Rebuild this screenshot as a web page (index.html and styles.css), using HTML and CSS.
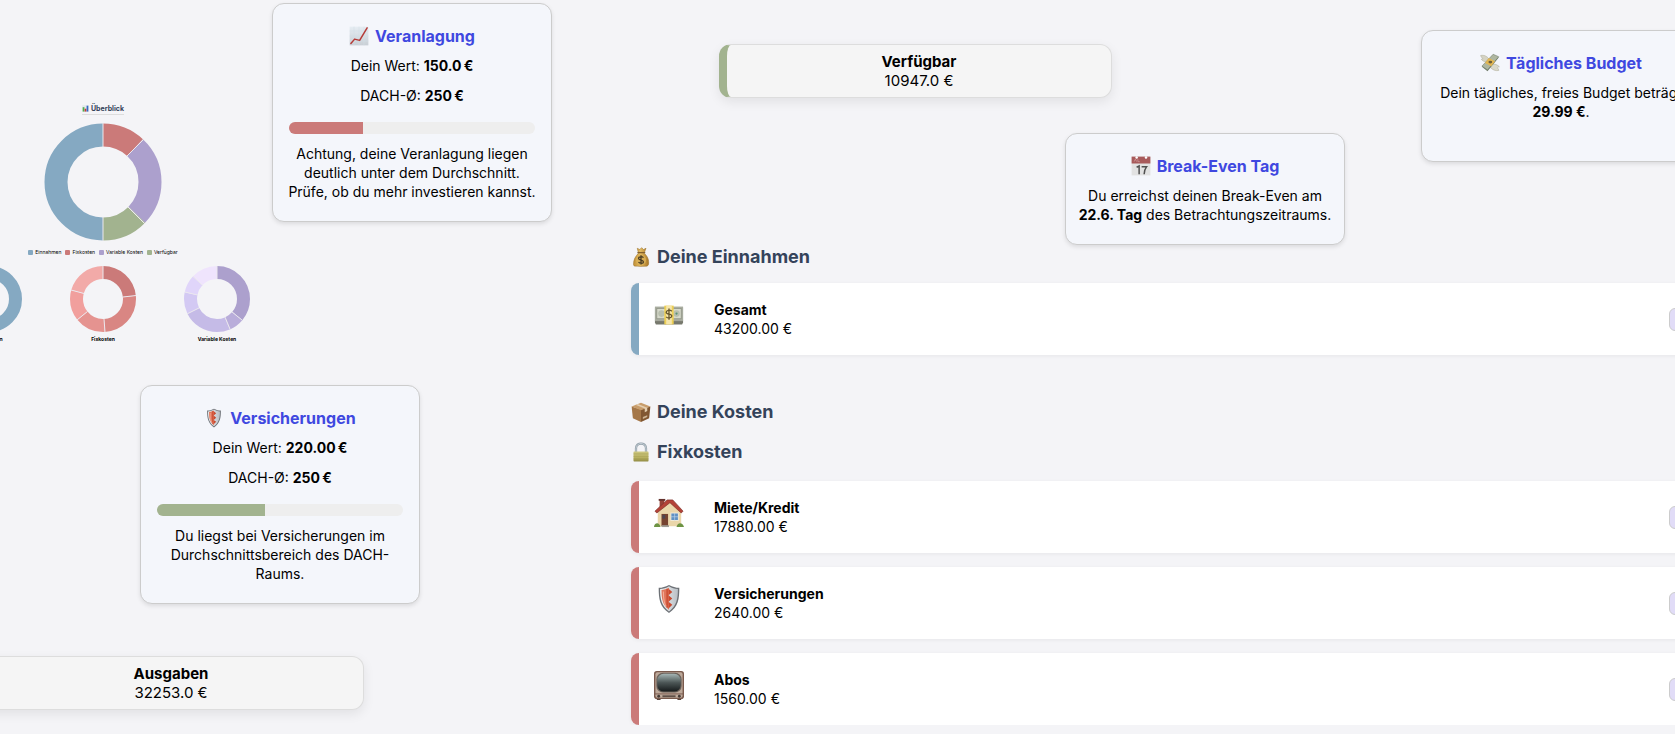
FILE: index.html
```html
<!DOCTYPE html>
<html lang="de">
<head>
  <meta charset="UTF-8" />
  <meta name="viewport" content="width=device-width, initial-scale=1.0"/>
  <title>Finanzübersicht</title>
  <link rel="stylesheet" href="styles.css">
</head>
<body>
  <!-- Icons -->
  <svg class="sprite" aria-hidden="true">
    <defs>
      <linearGradient id="paper" x1="0" y1="0" x2="0" y2="1">
        <stop offset="0" stop-color="#e6edf3"/><stop offset="1" stop-color="#c9cfd5"/>
      </linearGradient>
      <linearGradient id="screen" x1="0" y1="0" x2="0" y2="1">
        <stop offset="0" stop-color="#a5b5b4"/><stop offset="0.5" stop-color="#4c5656"/><stop offset="1" stop-color="#161a1b"/>
      </linearGradient>
      <linearGradient id="gold" x1="0" y1="0" x2="1" y2="0">
        <stop offset="0" stop-color="#c08f36"/><stop offset="0.45" stop-color="#e3bb62"/><stop offset="1" stop-color="#a97727"/>
      </linearGradient>
      <linearGradient id="brass" x1="0" y1="0" x2="0" y2="1">
        <stop offset="0" stop-color="#cfc983"/><stop offset="0.6" stop-color="#b9b263"/><stop offset="1" stop-color="#938d45"/>
      </linearGradient>
      <linearGradient id="steel" x1="0" y1="0" x2="1" y2="0">
        <stop offset="0" stop-color="#f2f4f5"/><stop offset="1" stop-color="#b9bfc5"/>
      </linearGradient>
    </defs>
    <symbol id="i-trend" viewBox="0 0 32 32">
      <rect x="1" y="1" width="30" height="30" fill="url(#paper)"/>
      <path d="M1 8h30M1 16h30M1 24h30M8 1v30M16 1v30M24 1v30" stroke="#d3dce4" stroke-width="0.8"/>
      <path d="M3 28l6-7 8 2 6-10 6-10" fill="none" stroke="#b63b38" stroke-width="2.4" stroke-linecap="round" stroke-linejoin="round"/>
    </symbol>
    <symbol id="i-bars" viewBox="0 0 32 32">
      <rect x="1" y="1" width="30" height="30" fill="#e3e8ec"/>
      <rect x="3" y="10" width="8" height="20" fill="#4fae4a"/>
      <rect x="12" y="17" width="8" height="13" fill="#c8393a"/>
      <rect x="21" y="3" width="8" height="27" fill="#3568c4"/>
    </symbol>
    <symbol id="i-shield" viewBox="0 0 32 32">
      <path d="M16 1c4 2 7 3 11 3 0 12-1 20-11 27C6 24 5 16 5 4c4 0 7-1 11-3z" fill="#6d7176"/>
      <path d="M16 2.500c3 2 6 2.700 9.500 2.900C25.500 16 24 23.500 16 29.200 8 23.500 6.500 16 6.500 5.400 10 5.200 13 4.500 16 2.500z" fill="url(#steel)"/>
      <path d="M16 4c-3 1.500-5 2.200-8 2.400C8 16 9 22 16 27.500z" fill="#e0765c"/>
      <path d="M15.500 5l4 3.500-4 3.500zM15.500 12l4 3.500-4 3.500zM15.500 19l4 3-4 4z" fill="#c94a30"/>
      <path d="M14 5v20" stroke="#c94a30" stroke-width="1.500"/>
      <path d="M10 8c0 7 0 12 3 16" fill="none" stroke="#f2aa94" stroke-width="1.200"/>
    </symbol>
    <symbol id="i-calendar" viewBox="0 0 32 32">
      <rect x="1" y="1" width="30" height="30" fill="#e2e2e2"/>
      <rect x="1" y="1" width="30" height="11" fill="#a85a5b"/>
      <path d="M5 9l2-4 2 4M11 5v4h3" fill="none" stroke="#d5a5a5"/>
      <circle cx="9" cy="2.500" r="2" fill="#fff"/><circle cx="24" cy="2.500" r="2" fill="#fff"/>
      <path d="M9 18l4-2v13M17 17h8c-3 4-4 8-4 12" fill="none" stroke="#505050" stroke-width="2.400"/>
    </symbol>
    <symbol id="i-wings" viewBox="0 0 32 32">
      <path d="M15 10C10 4 6 3 1 4c1 3 2 4 4 5-1 0-2 1-3 1 2 3 5 4 9 4z" fill="#d5d3c3" stroke="#aaa895" stroke-width="0.800"/>
      <path d="M19 18c5-1 9 1 12 4-2 0-3 1-3 2 1 1 2 2 2 4-5 1-11-1-14-6z" fill="#dbd9ca" stroke="#aaa895" stroke-width="0.800"/>
      <path d="M21 3l9 4-18 22-9-7z" fill="#6f7b69"/>
      <path d="M21 2l9 4-18 21-9-6z" fill="#aeb6a0" stroke="#667260" stroke-width="0.800"/>
      <path d="M14 8l10 5-6 8-10-5z" fill="#e2b652"/>
      <ellipse cx="16.500" cy="14.500" rx="3" ry="2.200" fill="#6b5f3c"/>
    </symbol>
    <symbol id="i-bag" viewBox="0 0 32 32">
      <path d="M10 2l4 2 3-3 3 3 4-2-3 8c6 5 8 11 7 18-1 3-3 3-12 3S4 31 4 28c0-8 3-13 8-18z" fill="url(#gold)" stroke="#94681f" stroke-width="0.800"/>
      <path d="M11 9h11" stroke="#83602d" stroke-width="2" stroke-linecap="round"/>
      <circle cx="16" cy="21" r="8" fill="#d8ae55"/>
      <path d="M20 17c-2-2-8-2-8 1 0 4 8 2 8 6 0 3-6 3-8 0M16 13v15" fill="none" stroke="#473b25" stroke-width="2"/>
    </symbol>
    <symbol id="i-note" viewBox="0 0 32 32">
      <path d="M1 8h30v16l-1 2H2l-1-2z" fill="#77796d"/>
      <path d="M1 22h30" stroke="#a9ac9f" stroke-width="1"/>
      <rect x="1" y="7" width="30" height="15" fill="#a9ada0"/>
      <rect x="3" y="9" width="26" height="11" fill="#d6d9cb" stroke="#8c9082" stroke-width="0.800"/>
      <circle cx="8" cy="14.500" r="3.500" fill="#b8bfae"/><circle cx="24" cy="14.500" r="3.500" fill="#b8bfae"/>
      <circle cx="24" cy="14.500" r="1.200" fill="#579277"/>
      <rect x="11" y="6" width="10" height="20" fill="#edcf55"/>
      <rect x="13" y="6" width="6" height="20" fill="#f5e6ac"/>
      <path d="M19 12c-2-2-6-1-6 1 0 3 6 1 6 4 0 2-4 3-6 1M16 9v12" fill="none" stroke="#66572c" stroke-width="1.400"/>
    </symbol>
    <symbol id="i-box" viewBox="0 0 32 32">
      <path d="M1 7l15 5v20L3 26z" fill="#a57748"/>
      <path d="M31 7l-15 5v20l13-6z" fill="#815732"/>
      <path d="M1 7l15-6 15 6-15 6z" fill="#c89d6c"/>
      <path d="M7 4.500l15 6v6l4-2V9L11 3z" fill="#e4ceb0"/>
      <path d="M19 24l7-3v3l-7 3z" fill="#cdb494"/>
    </symbol>
    <symbol id="i-lock" viewBox="0 0 32 32">
      <path d="M8 16V10c0-10 16-10 16 0v6" fill="none" stroke="#8d9ba5" stroke-width="3.600"/>
      <path d="M8 16V10c0-10 16-10 16 0v6" fill="none" stroke="#c7d1d8" stroke-width="1.600"/>
      <rect x="4" y="15" width="24" height="16" rx="1" fill="url(#brass)"/>
      <path d="M4 19h24M4 23h24M4 27h24" stroke="#a39c50" stroke-width="0.800"/>
    </symbol>
    <symbol id="i-house" viewBox="0 0 32 32">
      <rect x="6" y="2" width="5" height="9" fill="#974238"/>
      <rect x="5" y="1" width="7" height="2" fill="#65332e"/>
      <path d="M4 13L17 3l12 10v17H4z" fill="#ead6aa"/>
      <path d="M1 14L14 2h6l11 12-2 2L17 5 3 16z" fill="#b44237" stroke="#7d2f29" stroke-width="0.700"/>
      <rect x="8" y="17" width="7" height="13" fill="#754330"/>
      <rect x="9" y="18" width="3" height="4" fill="#4d4550"/>
      <rect x="18" y="16" width="8" height="8" fill="#5f91c4" stroke="#f4ecd8"/>
      <path d="M22 16v8M18 20h8" stroke="#bed4e8" stroke-width="0.700"/>
      <path d="M0 31c0-5 6-6 7 0zM24 31c1-6 7-5 8 0z" fill="#6e9444"/>
      <path d="M8 30h8" stroke="#9f9c93" stroke-width="2"/>
    </symbol>
    <symbol id="i-tv" viewBox="0 0 32 32">
      <rect x="3" y="29" width="4" height="3" fill="#59453d"/><rect x="25" y="29" width="4" height="3" fill="#59453d"/>
      <rect x="0" y="1" width="32" height="30" rx="3" fill="#795a4d"/>
      <rect x="1.500" y="2.500" width="29" height="27" rx="2" fill="#bda99a"/>
      <rect x="2.500" y="3" width="27" height="21" rx="7" fill="#6b625b"/>
      <rect x="3.500" y="4" width="25" height="19" rx="7" fill="url(#screen)"/>
      <path d="M1 25.500h30" stroke="#795a4d"/>
      <rect x="9" y="27" width="14" height="2" fill="#5f5048"/>
      <circle cx="5" cy="28" r="1.500" fill="#443a35"/><circle cx="27" cy="28" r="1.500" fill="#443a35"/>
    </symbol>
  </svg>

  <div class="dashboard">
    <div class="side">
      <div class="side-top">
        <section class="charts">
          <h2 class="charts-title"><svg class="icon-xs"><use href="#i-bars"/></svg>Überblick</h2>
          <svg class="donut-main" viewBox="0 0 118 118" role="img" aria-label="Überblick">
            <g class="ring ring-main">
              <circle class="c-red" cx="59" cy="59" r="47" pathLength="360" stroke-dasharray="43 360"/>
              <circle class="c-purple" cx="59" cy="59" r="47" pathLength="360" stroke-dasharray="91 360" stroke-dashoffset="-43"/>
              <circle class="c-green" cx="59" cy="59" r="47" pathLength="360" stroke-dasharray="46 360" stroke-dashoffset="-134"/>
              <circle class="c-blue" cx="59" cy="59" r="47" pathLength="360" stroke-dasharray="180 360" stroke-dashoffset="-180"/>
            </g>
            <path class="cut" d="M59 24V0M83 33l17-17M84 84l17 17M59 94v24"/>
          </svg>
          <ul class="legend">
            <li><i class="swatch bg-blue"></i>Einnahmen</li>
            <li><i class="swatch bg-red"></i>Fixkosten</li>
            <li><i class="swatch bg-purple"></i>Variable Kosten</li>
            <li><i class="swatch bg-green"></i>Verfügbar</li>
          </ul>
          <div class="donut-row">
            <figure>
              <svg class="donut" viewBox="0 0 66 66">
                <circle class="ring c-blue" cx="33" cy="33" r="26.500"/>
              </svg>
              <figcaption>Einnahmen</figcaption>
            </figure>
            <figure>
              <svg class="donut" viewBox="0 0 66 66">
                <g class="ring">
                  <circle class="c-red" cx="33" cy="33" r="26.500" pathLength="360" stroke-dasharray="84 360"/>
                  <circle stroke="#d98683" cx="33" cy="33" r="26.500" pathLength="360" stroke-dasharray="93 360" stroke-dashoffset="-84"/>
                  <circle stroke="#e59390" cx="33" cy="33" r="26.500" pathLength="360" stroke-dasharray="54 360" stroke-dashoffset="-177"/>
                  <circle stroke="#f19f9d" cx="33" cy="33" r="26.500" pathLength="360" stroke-dasharray="55 360" stroke-dashoffset="-231"/>
                  <circle stroke="#f2aaa8" cx="33" cy="33" r="26.500" pathLength="360" stroke-dasharray="74 360" stroke-dashoffset="-286"/>
                </g>
                <path class="cut" d="M33 13V0M53 31l13-1.500M34 53l1 13M17.500 45.500L7 54M14 27.500L1 24"/>
              </svg>
              <figcaption>Fixkosten</figcaption>
            </figure>
            <figure>
              <svg class="donut" viewBox="0 0 66 66">
                <g class="ring">
                  <circle class="c-purple" cx="33" cy="33" r="26.500" pathLength="360" stroke-dasharray="130 360"/>
                  <circle stroke="#b9adda" cx="33" cy="33" r="26.500" pathLength="360" stroke-dasharray="27 360" stroke-dashoffset="-130"/>
                  <circle stroke="#c5bbe7" cx="33" cy="33" r="26.500" pathLength="360" stroke-dasharray="87 360" stroke-dashoffset="-157"/>
                  <circle stroke="#d3c9f3" cx="33" cy="33" r="26.500" pathLength="360" stroke-dasharray="38 360" stroke-dashoffset="-244"/>
                  <circle stroke="#e0d5fa" cx="33" cy="33" r="26.500" pathLength="360" stroke-dasharray="31 360" stroke-dashoffset="-282"/>
                  <circle stroke="#efe4fd" cx="33" cy="33" r="26.500" pathLength="360" stroke-dasharray="47 360" stroke-dashoffset="-313"/>
                </g>
                <path class="cut" d="M33 13V0M48 46l10 8M41 51l5 12M15 42L3 48M13.500 29L1 26M18.500 19.500L9 10"/>
              </svg>
              <figcaption>Variable Kosten</figcaption>
            </figure>
          </div>
        </section>

        <section class="card card-invest">
          <h3><svg class="icon-sm"><use href="#i-trend"/></svg>Veranlagung</h3>
          <p>Dein Wert: <strong>150.0&#8239;€</strong></p>
          <p>DACH-Ø: <strong>250&#8239;€</strong></p>
          <div class="bar"><div class="bar-fill bg-red" style="width: 30%"></div></div>
          <p>Achtung, deine Veranlagung liegen deutlich unter dem Durchschnitt. Prüfe, ob du mehr investieren kannst.</p>
        </section>
      </div>

      <section class="card card-insurance">
        <h3><svg class="icon-sm"><use href="#i-shield"/></svg>Versicherungen</h3>
        <p>Dein Wert: <strong>220.00&#8239;€</strong></p>
        <p>DACH-Ø: <strong>250&#8239;€</strong></p>
        <div class="bar"><div class="bar-fill bg-green" style="width: 44%"></div></div>
        <p>Du liegst bei Versicherungen im Durchschnittsbereich des DACH-Raums.</p>
      </section>

      <div class="total total-spent">
        <strong>Ausgaben</strong>
        <span>32253.0 €</span>
      </div>
    </div>

    <main class="main">
      <div class="main-top">
        <div class="total total-free">
          <strong>Verfügbar</strong>
          <span>10947.0 €</span>
        </div>
        <section class="card card-break">
          <h3><svg class="icon-sm"><use href="#i-calendar"/></svg>Break-Even Tag</h3>
          <p>Du erreichst deinen Break-Even am <strong>22.6. Tag</strong> des Betrachtungszeitraums.</p>
        </section>
        <section class="card card-budget">
          <h3><svg class="icon-sm"><use href="#i-wings"/></svg>Tägliches Budget</h3>
          <p>Dein tägliches, freies Budget beträgt <strong>29.99 €</strong>.</p>
        </section>
      </div>

      <h2><svg class="icon-md"><use href="#i-bag"/></svg>Deine Einnahmen</h2>
      <ul class="list list-income">
        <li class="entry entry-income">
          <svg class="icon-lg"><use href="#i-note"/></svg>
          <div class="entry-text"><strong>Gesamt</strong><span>43200.00 €</span></div>
          <button class="entry-btn" type="button" aria-label="Gesamt öffnen"></button>
        </li>
      </ul>

      <h2><svg class="icon-md"><use href="#i-box"/></svg>Deine Kosten</h2>
      <h2 class="sub"><svg class="icon-md"><use href="#i-lock"/></svg>Fixkosten</h2>
      <ul class="list">
        <li class="entry entry-fixed">
          <svg class="icon-lg"><use href="#i-house"/></svg>
          <div class="entry-text"><strong>Miete/Kredit</strong><span>17880.00 €</span></div>
          <button class="entry-btn" type="button" aria-label="Miete/Kredit öffnen"></button>
        </li>
        <li class="entry entry-fixed">
          <svg class="icon-lg"><use href="#i-shield"/></svg>
          <div class="entry-text"><strong>Versicherungen</strong><span>2640.00 €</span></div>
          <button class="entry-btn" type="button" aria-label="Versicherungen öffnen"></button>
        </li>
        <li class="entry entry-fixed">
          <svg class="icon-lg"><use href="#i-tv"/></svg>
          <div class="entry-text"><strong>Abos</strong><span>1560.00 €</span></div>
          <button class="entry-btn" type="button" aria-label="Abos öffnen"></button>
        </li>
      </ul>
    </main>
  </div>
</body>
</html>
```

FILE: styles.css
```css
* {
  box-sizing: border-box;
}

body {
  font-family: Inter, "Liberation Sans", sans-serif;
  font-size: 14px;
  line-height: 19px;
  background-color: #f4f4f7;
  color: #000;
  margin: 0;
  overflow: hidden;
}

h2, h3, p, ul, figure {
  margin: 0;
  padding: 0;
}

ul {
  list-style: none;
}

.sprite {
  position: absolute;
  width: 0;
  height: 0;
}

.dashboard {
  display: grid;
  grid-template-columns: 551px 1fr;
  column-gap: 80px;
}

/* Farben */
.c-blue { stroke: #85a9c2; }
.c-red { stroke: #cb7a79; }
.c-purple { stroke: #aca0cd; }
.c-green { stroke: #a2b38f; }
.bg-blue { background: #85a9c2; }
.bg-red { background: #cb7a79; }
.bg-purple { background: #aca0cd; }
.bg-green { background: #a2b38f; }

/* Icons */
.icon-xs {
  width: 7px;
  height: 7px;
  margin-right: 2px;
}

.icon-sm,
.icon-md {
  width: 20px;
  height: 20px;
  margin-right: 6px;
}

.icon-lg {
  width: 30px;
  height: 30px;
}

/* Diagramme */
.side-top {
  display: flex;
  align-items: flex-start;
  height: 343px;
}

.charts {
  flex: none;
  width: 342px;
  margin: 0 -2px 0 -68px;
  padding-top: 103px;
  display: flex;
  flex-direction: column;
  align-items: center;
}

.charts-title {
  display: flex;
  align-items: center;
  font-size: 7px;
  line-height: 11px;
  color: #34435a;
  border-bottom: 1px solid #ddd;
}

.donut-main {
  width: 118px;
  height: 118px;
  margin-top: 8px;
}

.ring {
  fill: none;
  stroke-width: 13;
  transform: rotate(-90deg);
  transform-origin: center;
}

.ring-main {
  stroke-width: 23;
}

.cut {
  stroke: #ebe8ee;
  stroke-width: 1;
}

.legend {
  display: flex;
  gap: 4px;
  margin-top: 7px;
  font-size: 5px;
  line-height: 8px;
}

.legend li {
  display: flex;
  align-items: center;
  gap: 2px;
}

.swatch {
  width: 5px;
  height: 5px;
  border-radius: 1px;
}

.donut-row {
  display: grid;
  grid-template-columns: repeat(3, 1fr);
  width: 100%;
  margin-top: 10px;
  text-align: center;
}

.donut {
  display: block;
  width: 66px;
  height: 66px;
  margin: 0 auto;
}

figcaption {
  margin-top: 3px;
  font-size: 5px;
  line-height: 8px;
  font-weight: 700;
}

/* Karten */
.card {
  width: 280px;
  padding: 22px 16px 20px;
  background: #f4f6fb;
  border: 1px solid #ccc;
  border-radius: 12px;
  box-shadow: 0 2px 4px rgba(0, 0, 0, 0.1);
  text-align: center;
}

.card h3 {
  display: flex;
  justify-content: center;
  align-items: center;
  font-size: 16px;
  line-height: 20px;
  color: #3f48e0;
}

.card p {
  margin: 11px -6px 0;
}

.card h3 + p {
  margin-top: 10px;
}

.card .bar {
  height: 12px;
  margin-top: 17px;
  background: #eee;
  border-radius: 6px;
  overflow: hidden;
}

.bar-fill {
  height: 100%;
}

.card .bar + p {
  margin-top: 10px;
}

.card-invest {
  flex: none;
  margin-top: 3px;
}

.card-insurance {
  margin: 42px 0 0 140px;
}

.total {
  width: 393px;
  display: flex;
  flex-direction: column;
  align-items: center;
  padding: 7px 0;
  background: #f5f5f5;
  border: 1px solid #ddd;
  border-left-width: 8px;
  border-radius: 12px;
  box-shadow: 0 4px 12px rgba(0, 0, 0, 0.08);
  font-size: 15px;
}

.total-spent {
  margin: 52px 0 0 -29px;
  border-left-color: #cb7a79;
}

.total-free {
  grid-column: 2 / 4;
  margin-top: 44px;
  border-left-color: #a2b38f;
}

/* Rechte Spalte */
.main {
  margin-right: -60px;
}

.main-top {
  display: grid;
  grid-template-columns: 88fr 346px 47px 233px 76fr 280px;
  grid-template-rows: 246px;
  align-items: start;
  padding-right: 34px;
}

.total-free,
.card-break,
.card-budget {
  grid-row: 1;
}

.card-break {
  grid-column: 3 / 5;
  margin-top: 133px;
}

.card-budget {
  grid-column: 6;
  margin-top: 30px;
  min-height: 132px;
}

.main h2 {
  display: flex;
  align-items: center;
  font-size: 18px;
  line-height: 22px;
  color: #34435a;
}

.main .sub {
  margin-top: 18px;
}

.list {
  display: flex;
  flex-direction: column;
  gap: 14px;
  margin-top: 18px;
}

.list-income {
  margin: 15px 0 46px;
}

.entry {
  display: flex;
  gap: 30px;
  height: 72px;
  padding: 17px 22px 17px 15px;
  background: #fff;
  border-left: 8px solid;
  border-radius: 8px;
  box-shadow: 0 1px 4px rgba(0, 0, 0, 0.06);
}

.entry-income {
  border-left-color: #85a9c2;
}

.entry-fixed {
  border-left-color: #cb7a79;
}

.entry-text {
  display: flex;
  flex-direction: column;
  flex: 1;
}

.entry-btn {
  align-self: center;
  width: 44px;
  height: 23px;
  background: #e1dcf7;
  border: 1px solid #ccc;
  border-radius: 6px;
}
```
